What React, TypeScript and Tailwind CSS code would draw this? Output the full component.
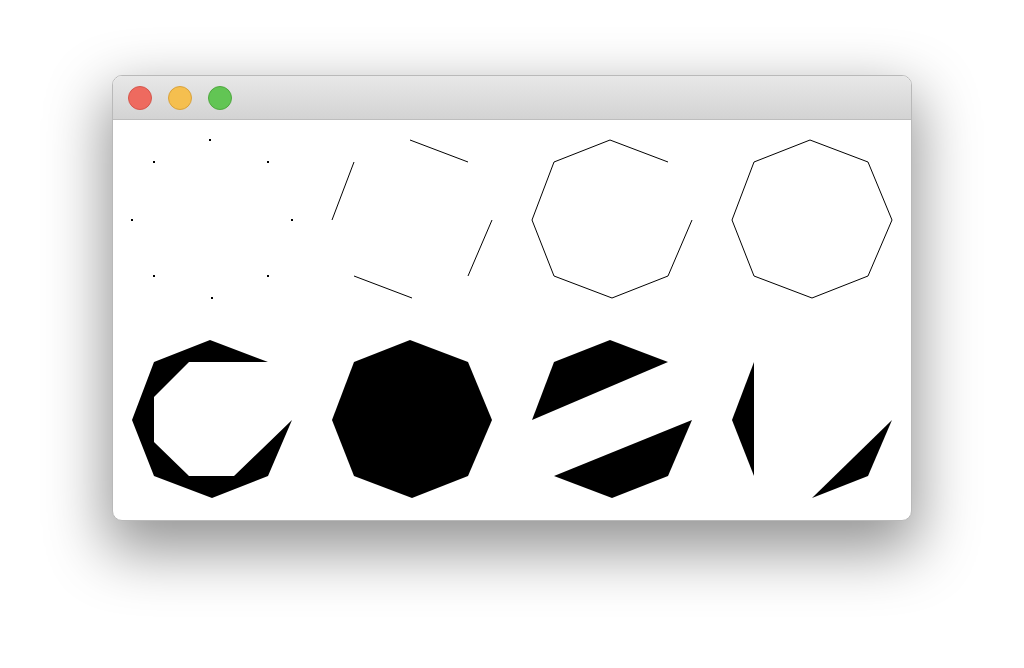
import React from "react";

const A: [number, number] = [98, 20];
const B: [number, number] = [156, 42];
const C: [number, number] = [180, 100];
const D: [number, number] = [156, 156];
const E: [number, number] = [100, 178];
const F: [number, number] = [42, 156];
const G: [number, number] = [20, 100];
const H: [number, number] = [42, 42];

const pts = (arr: [number, number][]) => arr.map((p) => p.join(",")).join(" ");

function Cell({ children }: { children: React.ReactNode }) {
  return (
    <div className="w-[200px] h-[200px]">
      <svg width="200" height="200" viewBox="0 0 200 200">
        {children}
      </svg>
    </div>
  );
}

export default function App() {
  const all = [A, B, C, D, E, F, G, H];
  return (
    <div className="w-full h-[668px] bg-white pt-[75px] px-[112px]">
      <div className="w-[800px] rounded-[10px] overflow-hidden border border-[#b9b9b9] shadow-[0_24px_60px_6px_rgba(0,0,0,0.42)] bg-white">
        <div className="h-[44px] bg-gradient-to-b from-[#e8e8e8] to-[#d3d3d3] border-b border-[#bdbdbd] flex items-center gap-[16px] pl-[15px]">
          <div className="w-[24px] h-[24px] rounded-full bg-[#ee6a5f] border border-[#d5564c]" />
          <div className="w-[24px] h-[24px] rounded-full bg-[#f5bf4f] border border-[#d9a23c]" />
          <div className="w-[24px] h-[24px] rounded-full bg-[#62c554] border border-[#4fa83f]" />
        </div>
        <div className="grid grid-cols-4 w-[800px] h-[400px] -ml-px">
          <Cell>
            {all.map((p, i) => (
              <rect key={i} x={p[0] - 1} y={p[1] - 1} width={2} height={2} fill="#000" />
            ))}
          </Cell>
          <Cell>
            <g stroke="#000" strokeWidth={1} fill="none">
              <line x1={C[0]} y1={C[1]} x2={D[0]} y2={D[1]} />
              <line x1={E[0]} y1={E[1]} x2={F[0]} y2={F[1]} />
              <line x1={G[0]} y1={G[1]} x2={H[0]} y2={H[1]} />
              <line x1={A[0]} y1={A[1]} x2={B[0]} y2={B[1]} />
            </g>
          </Cell>
          <Cell>
            <polyline points={pts([C, D, E, F, G, H, A, B])} stroke="#000" strokeWidth={1} fill="none" />
          </Cell>
          <Cell>
            <polygon points={pts([C, D, E, F, G, H, A, B])} stroke="#000" strokeWidth={1} fill="none" />
          </Cell>
          <Cell>
            <polygon
              points={pts([C, D, E, F, G, H, A, B, [77, 42], [42, 77], [42, 122], [77, 156], [122, 156]])}
              fill="#000"
            />
          </Cell>
          <Cell>
            <polygon points={pts([C, D, E, F, G, H, A, B])} fill="#000" />
          </Cell>
          <Cell>
            <polygon points={pts([C, D, E, F])} fill="#000" />
            <polygon points={pts([G, H, A, B])} fill="#000" />
          </Cell>
          <Cell>
            <polygon points={pts([C, D, E])} fill="#000" />
            <polygon points={pts([F, G, H])} fill="#000" />
          </Cell>
        </div>
      </div>
    </div>
  );
}
